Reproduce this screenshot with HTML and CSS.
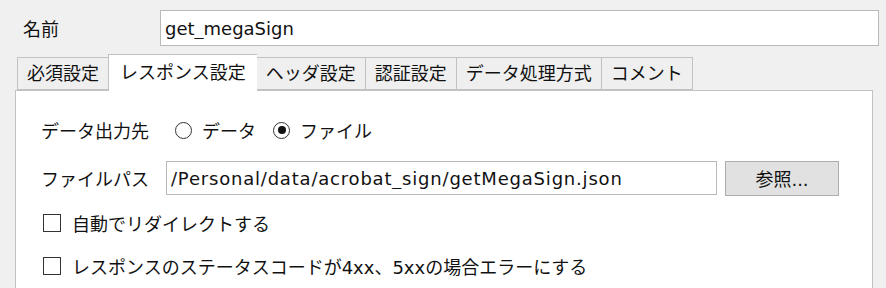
FILE: index.html
```html
<!DOCTYPE html>
<html lang="ja">
<head>
  <meta charset="UTF-8">
  <title>レスポンス設定</title>
  <link rel="stylesheet" href="styles.css">
</head>
<body>
  <div class="dialog">
    <div class="name-row">
      <label class="name-label">名前</label>
      <input type="text" class="textbox name-input" value="get_megaSign">
    </div>

    <div class="tabs">
      <div class="tab">必須設定</div>
      <div class="tab active">レスポンス設定</div>
      <div class="tab">ヘッダ設定</div>
      <div class="tab">認証設定</div>
      <div class="tab">データ処理方式</div>
      <div class="tab">コメント</div>
    </div>

    <div class="panel">
      <div class="row output-row">
        <span class="row-label">データ出力先</span>
        <label class="radio"><span class="radio-mark"></span>データ</label>
        <label class="radio checked"><span class="radio-mark"></span>ファイル</label>
      </div>

      <div class="row path-row">
        <span class="row-label">ファイルパス</span>
        <input type="text" class="textbox path-input" value="/Personal/data/acrobat_sign/getMegaSign.json">
        <button class="browse">参照...</button>
      </div>

      <label class="row check"><span class="check-mark"></span>自動でリダイレクトする</label>
      <label class="row check"><span class="check-mark"></span>レスポンスのステータスコードが4xx、5xxの場合エラーにする</label>
    </div>
  </div>
</body>
</html>
```

FILE: styles.css
```css
:root {
  --bg: #f0f0f0;
  --text: #111;
  --border: #b9b9b9;
  --tab-border: #c2c2c2;
}

body {
  margin: 0;
  background: var(--bg);
  color: var(--text);
  font-family: "DejaVu Sans", "Noto Sans CJK JP", sans-serif;
  font-size: 18px;
}

.dialog {
  height: 288px;
  overflow: hidden;
}

.name-row {
  display: flex;
  align-items: center;
  padding: 10px 7px 0 23px;
}

.name-label {
  width: 137px;
}

.textbox {
  font: inherit;
  color: var(--text);
  background: #fff;
  border: 1px solid var(--border);
  box-sizing: border-box;
  padding: 0 4px;
  outline: none;
}

.name-input {
  flex: 1;
  height: 36px;
}

.tabs {
  display: flex;
  align-items: flex-end;
  margin-top: 8px;
  padding-left: 17px;
  position: relative;
  z-index: 1;
}

.tab {
  height: 33px;
  box-sizing: border-box;
  padding: 0 9px;
  line-height: 31px;
  border: 1px solid var(--tab-border);
  border-right: none;
  background: #efefef;
  white-space: nowrap;
}

.tab:last-child {
  border-right: 1px solid var(--tab-border);
}

.tab.active {
  height: 37px;
  line-height: 35px;
  padding: 0 11px;
  background: #fff;
  border-bottom: none;
  margin-bottom: -1px;
}

.tab.active + .tab {
  border-left: none;
}

.panel {
  margin: 0 13px 0 15px;
  background: #fff;
  border: 1px solid var(--tab-border);
  height: 260px;
  padding: 22px 0 0 25px;
  box-sizing: border-box;
}

.row {
  display: flex;
  align-items: center;
  height: 34px;
}

.row-label {
  white-space: nowrap;
}

.output-row .row-label {
  margin-right: 26px;
}

.radio {
  display: flex;
  align-items: center;
  margin-right: 17px;
}

.radio-mark {
  width: 17px;
  height: 17px;
  box-sizing: border-box;
  border: 1px solid #333;
  border-radius: 50%;
  margin-right: 10px;
  display: flex;
  align-items: center;
  justify-content: center;
}

.radio.checked .radio-mark::after {
  content: "";
  width: 8px;
  height: 8px;
  border-radius: 50%;
  background: #111;
}

.path-row {
  margin-top: 14px;
}

.path-row .row-label {
  margin-right: 17px;
}

.path-input {
  width: 551px;
  height: 34px;
  letter-spacing: 0.8px;
}

.browse {
  margin-left: 8px;
  width: 114px;
  height: 35px;
  font: inherit;
  color: var(--text);
  background: #e1e1e1;
  border: 1px solid #adadad;
}

.check {
  margin-left: 2px;
  margin-top: 11px;
}

.check + .check {
  margin-top: 9px;
}

.check-mark {
  width: 18px;
  height: 18px;
  box-sizing: border-box;
  border: 1px solid #333;
  margin-right: 11px;
}
```
